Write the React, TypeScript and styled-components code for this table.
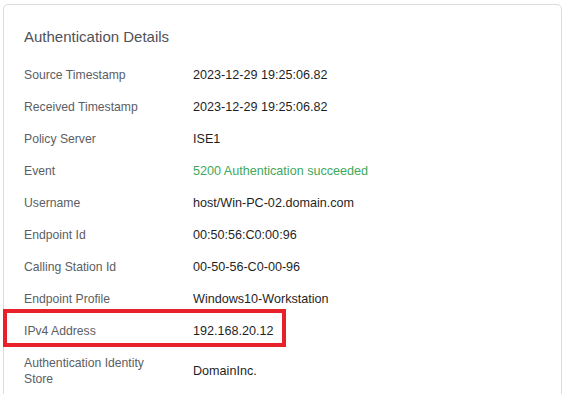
import React from 'react';
import styled, { createGlobalStyle } from 'styled-components';

const GlobalStyle = createGlobalStyle`
  html, body {
    margin: 0;
    padding: 0;
    background: #ffffff;
    font-family: "Liberation Sans", Arial, sans-serif;
  }
`;

const Page = styled.div`
  padding: 4px 6px 0 3px;
  height: 394px;
  overflow: hidden;
  box-sizing: border-box;
`;

const Card = styled.section`
  border: 1px solid #dcdcdc;
  border-radius: 5px;
  padding: 23px 20px 20px 20px;
  min-height: 420px;
`;

const Title = styled.h2`
  margin: 0 0 14px 0;
  font-size: 15px;
  line-height: 17px;
  font-weight: normal;
  color: #4f5257;
`;

const Row = styled.div<{ $highlight?: boolean }>`
  position: relative;
  display: grid;
  grid-template-columns: 169px 1fr;
  align-items: center;
  padding: 8px 0;
  line-height: 16px;

  ${(p) =>
    p.$highlight &&
    `
    &::after {
      content: '';
      position: absolute;
      left: -21px;
      top: -6px;
      width: 283px;
      bottom: 0;
      border: 4px solid #e8202a;
      box-sizing: border-box;
      pointer-events: none;
    }
  `}
`;

const Label = styled.div`
  font-size: 12.2px;
  color: #5b5e63;
  padding-right: 28px;
`;

const Value = styled.div<{ $tone?: 'success' }>`
  font-size: 12.6px;
  color: ${(p) => (p.$tone === 'success' ? '#3ea85a' : '#1f1f1f')};
`;

type Detail = {
  label: string;
  value: string;
  tone?: 'success';
  highlight?: boolean;
};

const details: Detail[] = [
  { label: 'Source Timestamp', value: '2023-12-29 19:25:06.82' },
  { label: 'Received Timestamp', value: '2023-12-29 19:25:06.82' },
  { label: 'Policy Server', value: 'ISE1' },
  { label: 'Event', value: '5200 Authentication succeeded', tone: 'success' },
  { label: 'Username', value: 'host/Win-PC-02.domain.com' },
  { label: 'Endpoint Id', value: '00:50:56:C0:00:96' },
  { label: 'Calling Station Id', value: '00-50-56-C0-00-96' },
  { label: 'Endpoint Profile', value: 'Windows10-Workstation' },
  { label: 'IPv4 Address', value: '192.168.20.12', highlight: true },
  { label: 'Authentication Identity Store', value: 'DomainInc.' },
];

const App = () => {
  return (
    <Page>
      <GlobalStyle />
      <Card>
        <Title>Authentication Details</Title>
        {details.map((d) => (
          <Row key={d.label} $highlight={d.highlight}>
            <Label>{d.label}</Label>
            <Value $tone={d.tone}>{d.value}</Value>
          </Row>
        ))}
      </Card>
    </Page>
  );
};

export default App;
